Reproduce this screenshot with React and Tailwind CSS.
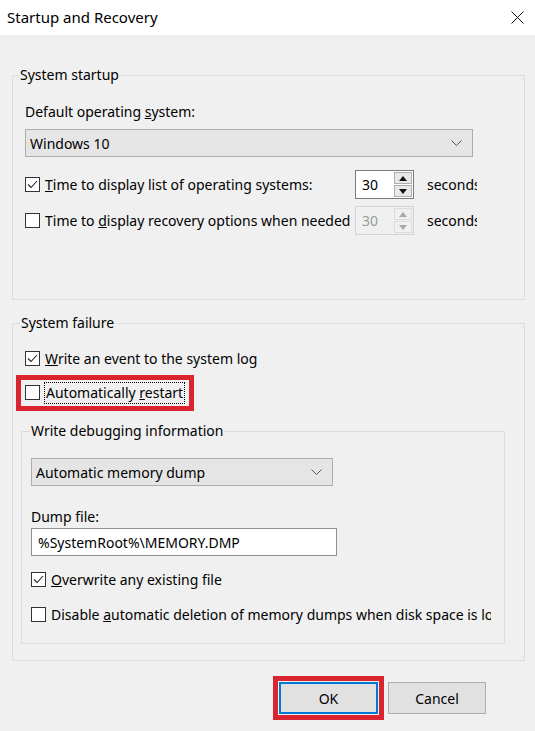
import React from "react";

const FONT = { fontFamily: '"Noto Sans", "Open Sans", sans-serif' };

function Check({ checked, className = "" }) {
  return (
    <span className={`flex h-[15px] w-[15px] shrink-0 items-center justify-center border border-[#333] bg-white ${className}`}>
      {checked && (
        <svg width="11" height="9" viewBox="0 0 11 9" fill="none">
          <path d="M1 4.5 L4 7.5 L10 1" stroke="#222" strokeWidth="1.1" />
        </svg>
      )}
    </span>
  );
}

function Chevron() {
  return (
    <svg width="11" height="6" viewBox="0 0 11 6" fill="none">
      <path d="M0.5 0.5 L5.5 5.5 L10.5 0.5" stroke="#555" strokeWidth="1" />
    </svg>
  );
}

function Combo({ value, width }) {
  return (
    <div className={`flex h-[28px] ${width} items-center justify-between border border-[#adadad] bg-[#e5e5e5] pl-[4px] pr-[10px] text-[14px] text-black`}>
      <span>{value}</span>
      <Chevron />
    </div>
  );
}

function Arrow({ up, color }) {
  return (
    <svg width="8" height="5" viewBox="0 0 8 5">
      <path d={up ? "M0 5 L4 0 L8 5 Z" : "M0 0 L4 5 L8 0 Z"} fill={color} />
    </svg>
  );
}

function Spinner({ disabled }) {
  const border = disabled ? "border-[#d4d4d4]" : "border-[#7a7a7a]";
  const btn = disabled ? "border-[#dcdcdc] bg-[#f0f0f0]" : "border-[#adadad] bg-[#e8e8e8]";
  const arrow = disabled ? "#a8a8a8" : "#111";
  return (
    <div className={`flex h-[29px] w-[59px] shrink-0 border ${border} ${disabled ? "bg-[#f0f0f0]" : "bg-white"}`}>
      <div className={`flex flex-1 items-center pl-[6px] text-[14px] ${disabled ? "text-[#9a9a9a]" : "text-black"}`}>30</div>
      <div className="flex w-[20px] flex-col gap-[1px] p-[1px]">
        <div className={`flex flex-1 items-center justify-center border ${btn}`}>
          <Arrow up color={arrow} />
        </div>
        <div className={`flex flex-1 items-center justify-center border ${btn}`}>
          <Arrow color={arrow} />
        </div>
      </div>
    </div>
  );
}

function Group({ title, legendMl, className = "", children }) {
  return (
    <fieldset className={`border border-[#dcdcdc] ${className}`}>
      <legend className={`${legendMl} px-[1px] text-[14px] leading-[20px] text-black`}>{title}</legend>
      {children}
    </fieldset>
  );
}

export default function App() {
  return (
    <div className="h-[731px] w-[535px] overflow-hidden bg-[#f0f0f0]" style={FONT}>
      <div className="flex h-[35px] items-center justify-between bg-white pl-[7px] pr-[11px]">
        <span className="text-[15px] text-black">Startup and Recovery</span>
        <svg width="13" height="13" viewBox="0 0 13 13" fill="none">
          <path d="M0.5 0.5 L12.5 12.5 M12.5 0.5 L0.5 12.5" stroke="#111" strokeWidth="1" />
        </svg>
      </div>

      <div className="pl-[12px] pr-[10px] pt-[30px]">
        <Group title="System startup" legendMl="-ml-[6px]" className="pb-[64px] pl-[12px]">
          <div className="mt-[17px] text-[14px] leading-[20px] text-black">
            Default operating <span className="underline">s</span>ystem:
          </div>
          <div className="mt-[7px]">
            <Combo value="Windows 10" width="w-[448px]" />
          </div>
          <div className="mt-[13px] flex h-[29px] items-center">
            <Check checked />
            <span className="ml-[5px] w-[310px] whitespace-nowrap text-[14px] text-black">
              <span className="underline">T</span>ime to display list of operating systems:
            </span>
            <Spinner />
            <span className="ml-[13px] w-[50px] overflow-hidden whitespace-nowrap text-[14px] text-black">seconds</span>
          </div>
          <div className="mt-[7px] flex h-[29px] items-center">
            <Check />
            <span className="ml-[5px] w-[310px] overflow-hidden whitespace-nowrap pr-[2px] text-[14px] text-black">
              Time to <span className="underline">d</span>isplay recovery options when needed
            </span>
            <Spinner disabled />
            <span className="ml-[13px] w-[50px] overflow-hidden whitespace-nowrap text-[14px] text-black">seconds</span>
          </div>
        </Group>

        <Group title="System failure" legendMl="ml-[7px]" className="mt-[13px] pb-[16px]">
          <div className="mt-[15px] flex h-[20px] items-center pl-[12px]">
            <Check checked />
            <span className="ml-[5px] text-[14px] text-black">
              <span className="underline">W</span>rite an event to the system log
            </span>
          </div>
          <div className="mt-[14px] pl-[12px]">
            <div className="relative inline-flex h-[20px] items-center">
              <span className="absolute -bottom-[8px] -left-[9px] -right-[9px] -top-[8px] border-[5px] border-[#d9252f]" />
              <Check />
              <span className="ml-[4px] border border-dotted border-black px-[1px] text-[14px] leading-[20px] text-black">
                Automatically <span className="underline">r</span>estart
              </span>
            </div>
          </div>

          <Group title="Write debugging information" legendMl="-ml-[1px]" className="ml-[8px] mr-[19px] mt-[15px] pb-[19px] pl-[9px]">
            <div className="mt-[17px]">
              <Combo value="Automatic memory dump" width="w-[302px]" />
            </div>
            <div className="mt-[21px] text-[14px] leading-[20px] text-black">Dump file:</div>
            <div className="mt-[1px] flex h-[28px] w-[306px] items-center border border-[#8f8f8f] bg-white pl-[6px] text-[14px] text-black">
              %SystemRoot%\MEMORY.DMP
            </div>
            <div className="mt-[13px] flex h-[20px] items-center">
              <Check checked />
              <span className="ml-[5px] text-[14px] text-black">
                <span className="underline">O</span>verwrite any existing file
              </span>
            </div>
            <div className="mt-[15px] flex h-[20px] w-[460px] items-center overflow-hidden">
              <Check />
              <span className="ml-[5px] whitespace-nowrap text-[14px] text-black">
                Disable <span className="underline">a</span>utomatic deletion of memory dumps when disk space is low
              </span>
            </div>
          </Group>
        </Group>

        <div className="mt-[21px] flex justify-end gap-[10px] pr-[39px]">
          <div className="relative">
            <span className="absolute -bottom-[6px] -left-[6px] -right-[6px] -top-[6px] border-[5px] border-[#d9252f]" />
            <button className="flex h-[32px] w-[99px] items-center justify-center border-2 border-[#0078d7] bg-[#e1e1e1] text-[14px] text-black">
              OK
            </button>
          </div>
          <button className="flex h-[32px] w-[98px] items-center justify-center border border-[#adadad] bg-[#e1e1e1] text-[14px] text-black">
            Cancel
          </button>
        </div>
      </div>
    </div>
  );
}
